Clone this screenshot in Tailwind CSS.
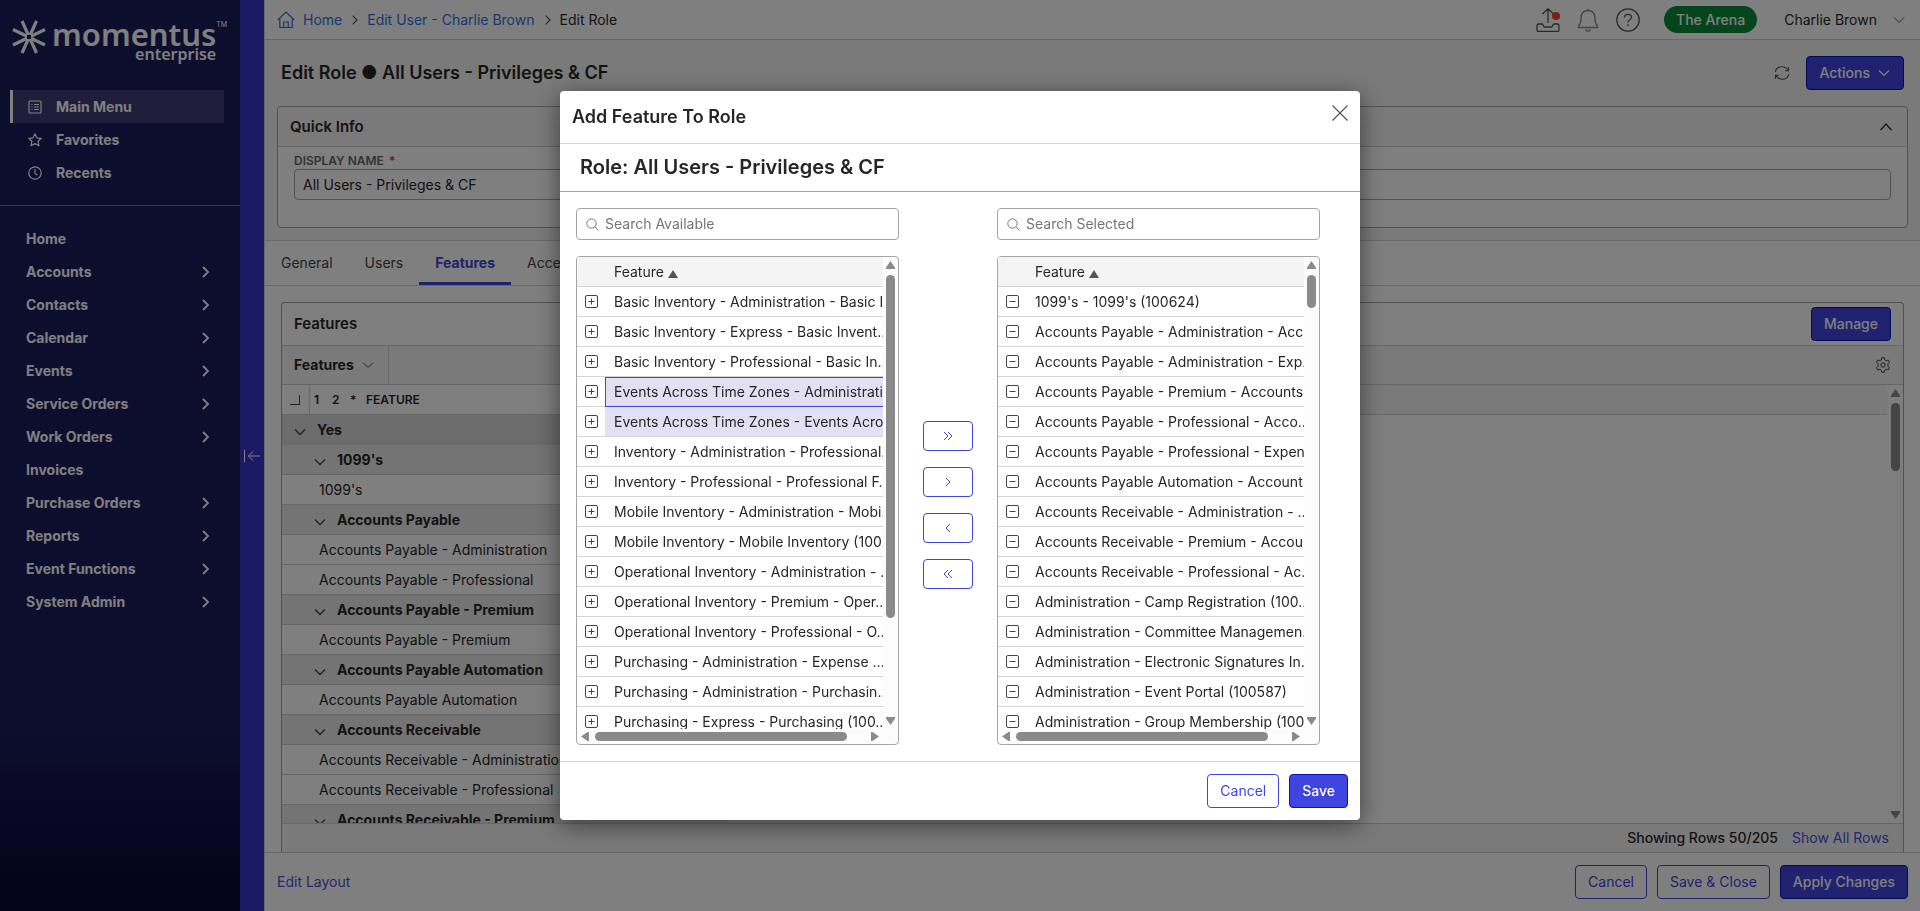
<!DOCTYPE html>
<html lang="en">
<head>
    <meta charset="UTF-8">
    <meta name="viewport" content="width=device-width, initial-scale=1.0">
    <title>Edit Role - Momentus Enterprise</title>
    <script src="https://cdn.jsdelivr.net/npm/@tailwindcss/browser@4"></script>
</head>
<body class="h-screen flex overflow-hidden bg-[#f4f4f4] font-[Inter,sans-serif] text-sm text-[#262626]">

    <!-- Sidebar -->
    <aside class="w-60 shrink-0 flex flex-col bg-linear-to-b from-[#1a1a5c] from-80% to-[#060632] text-white">
        <a href="#" aria-label="Momentus Enterprise" class="flex h-[90px] pt-5 pl-3 items-start">
            <svg class="w-[34px] h-[34px] shrink-0" viewBox="0 0 34 34" fill="none" stroke="currentColor" stroke-width="3.200">
                <path d="M1 9.500 33 25M1 25 33 9.500M10 1l14.500 32M24.500 1 10 33"/>
                <rect x="15" y="15" width="4" height="4" fill="#1a1a5c" stroke="none"/>
            </svg>
            <span class="flex flex-col items-end pl-1.5 font-['Noto_Sans',sans-serif] font-semibold">
                <span class="text-[31px] leading-7">momentus</span>
                <span class="text-base leading-3">enterprise</span>
            </span>
            <span class="text-[7px] leading-2.5">TM</span>
        </a>
        <nav class="flex flex-col pl-2.5 pr-4 pb-4 border-b border-white/40 font-bold">
            <a href="#" class="flex items-center h-[33px] pl-[15px] border-l-3 border-white bg-white/15">
                <svg class="w-3.5 h-3.5 mr-3.5" viewBox="0 0 14 14" fill="none" stroke="currentColor" stroke-width="1.200"><rect x="1" y="1" width="12" height="12" rx="1"/><path d="M3.500 4.500h1M6 4.500h5M3.500 7h1M6 7h5M3.500 9.500h1M6 9.500h5"/></svg>
                Main Menu
            </a>
            <a href="#" class="flex items-center h-[33px] pl-[15px] border-l-3 border-transparent">
                <svg class="w-3.5 h-3.5 mr-3.5" viewBox="0 0 14 14" fill="none" stroke="currentColor" stroke-width="1.200" stroke-linejoin="round"><path d="M7 .8l1.900 4 4.400.500-3.200 3 .900 4.500L7 10.600l-4 2.200.900-4.500-3.200-3 4.400-.500z"/></svg>
                Favorites
            </a>
            <a href="#" class="flex items-center h-[33px] pl-[15px] border-l-3 border-transparent">
                <svg class="w-3.5 h-3.5 mr-3.5" viewBox="0 0 14 14" fill="none" stroke="currentColor" stroke-width="1.200"><circle cx="7" cy="7" r="6.200"/><path d="M7 3v4.500l2.500 1.500"/></svg>
                Recents
            </a>
        </nav>
        <nav id="mainNav" class="flex flex-col pt-4 px-[26px] font-bold"></nav>
    </aside>
    <button aria-label="Collapse menu" class="w-6 shrink-0 flex items-center justify-center bg-[#3737ca] text-white">
        <svg class="w-4 h-4" viewBox="0 0 16 16" fill="none" stroke="currentColor"><path d="M.500 1.500v13M16 8H4.500M9 3.500 4.500 8 9 12.500"/></svg>
    </button>

    <main class="flex-1 min-w-0 flex flex-col border-l border-[#d0d0d0]">
        <!-- Top bar -->
        <header class="h-10 shrink-0 flex items-center justify-between pl-3 pr-[15px] bg-white border-b border-[#cfcfcf]">
            <div class="flex items-center text-[#2f6fe0]">
                <svg class="w-[18px] h-[18px] mr-2" viewBox="0 0 18 18" fill="none" stroke="currentColor" stroke-width="1.200"><path d="M.700 9 9 1l8.300 8M2.800 7.500V16.500h12.400V7.500M6.800 16.500V11h4.400v5.500"/></svg>
                <a href="#">Home</a>
                <svg class="w-1.5 h-2.5 ml-2.5 mr-[9px] text-[#555]" viewBox="0 0 6 10" fill="none" stroke="currentColor" stroke-width="1.200"><path d="M.700.700 5 5 .700 9.300"/></svg>
                <a href="#">Edit User - Charlie Brown</a>
                <svg class="w-1.5 h-2.5 ml-2.5 mr-[9px] text-[#555]" viewBox="0 0 6 10" fill="none" stroke="currentColor" stroke-width="1.200"><path d="M.700.700 5 5 .700 9.300"/></svg>
                <span class="text-[#262626]">Edit Role</span>
            </div>
            <div class="flex items-center text-[#555]">
                <button aria-label="Uploads" class="relative mr-4">
                    <svg class="w-6 h-6" viewBox="0 0 24 24" fill="none" stroke="currentColor" stroke-width="1.300" stroke-linejoin="round"><path d="M12 15V1M6.500 6 12 .8 17.500 6M1 17.500q0-1.500 1.500-1.500H6.500l1.700 3h7.600l1.700-3h4q1.500 0 1.500 1.500V22q0 1.300-1.300 1.300H2.300Q1 23.300 1 22z"/></svg>
                    <span class="absolute right-0 top-1 w-2 h-2 rounded-full bg-[#ff3a24]"></span>
                </button>
                <button aria-label="Notifications" class="mr-4 text-[#8a8a8a]">
                    <svg class="w-6 h-6" viewBox="0 0 24 24" fill="none" stroke="currentColor" stroke-width="1.300"><path d="M12 .500v2M2.500 19.500v-1.500Q5 15.500 5 10.500Q5 2.500 12 2.500T19 10.500q0 5 2.500 7.500v1.500zM9.500 21.500Q12 25 14.500 21.500"/></svg>
                </button>
                <button aria-label="Help" class="mr-6">
                    <svg class="w-6 h-6" viewBox="0 0 24 24" fill="none" stroke="currentColor" stroke-width="1.300"><circle cx="12" cy="12" r="11.200"/><path d="M8.500 9.500Q8.500 6.300 12 6.300T15.500 9.300Q15.500 11 13.500 12T12 14.500M12 16.300v1.700"/></svg>
                </button>
                <button class="h-[27px] px-3 rounded-full bg-[#0a8a38] text-white font-medium">The Arena</button>
                <button class="flex items-center ml-[27px] text-[#262626]">Charlie Brown
                    <svg class="w-3 h-3 ml-4 text-[#555]" viewBox="0 0 12 12" fill="none" stroke="currentColor"><path d="M1 3.500 6 8.500l5-5"/></svg>
                </button>
            </div>
        </header>

        <!-- Page title -->
        <div class="h-[66px] shrink-0 flex items-center justify-between px-4">
            <h1 class="text-lg font-semibold">Edit Role ● All Users - Privileges &amp; CF</h1>
            <div class="flex items-center">
                <button aria-label="Refresh" class="mr-4 text-[#555]">
                    <svg class="w-4 h-4" viewBox="0 0 16 16" fill="none" stroke="currentColor" stroke-width="1.100"><path d="M1.200 7Q2.200 1.700 8 1.700q4 0 6.300 4M14.500 2v3.800H11M14.800 9Q13.800 14.300 8 14.300q-4 0-6.300-4M1.500 14v-3.800H5"/></svg>
                </button>
                <button class="flex items-center h-[34px] pl-3 pr-[13px] rounded border border-[#0018b4] bg-[#4145e0] text-white font-medium">Actions
                    <svg class="w-3 h-3 ml-2" viewBox="0 0 12 12" fill="none" stroke="currentColor" stroke-width="1.200"><path d="M1 3.500 6 8.500l5-5"/></svg>
                </button>
            </div>
        </div>

        <!-- Quick info -->
        <section class="shrink-0 mx-3 mb-3 border border-[#a5a5a5] rounded bg-white">
            <div class="flex items-center justify-between h-10 pl-3 pr-3.5 rounded-t border-b border-[#cfcfcf] bg-[#f4f4f4]">
                <h2 class="text-[15px] font-semibold">Quick Info</h2>
                <button aria-label="Collapse"><svg class="w-3.5 h-3.5" viewBox="0 0 14 14" fill="none" stroke="currentColor" stroke-width="1.200"><path d="M1.500 10 7 4l5.500 6"/></svg></button>
            </div>
            <div class="px-4 pt-1.5 pb-[27px]">
                <label for="displayName" class="block h-4 text-xs leading-4 font-semibold text-[#666]">DISPLAY NAME <span class="ml-0.5 text-[#d93025]">*</span></label>
                <input id="displayName" type="text" value="All Users - Privileges &amp; CF" class="w-full h-[31px] px-2 border border-[#a5a5a5] rounded bg-white">
            </div>
        </section>

        <!-- Tabs -->
        <div class="h-[46px] shrink-0 flex bg-white border-y border-[#d4d4d4] text-[#444]">
            <a href="#" class="flex items-center px-4">General</a>
            <a href="#" class="flex items-center px-4">Users</a>
            <a href="#" class="flex items-center px-4 border-b-3 pt-0.5 border-[#3d42d8] font-bold text-[#3d42d8]">Features</a>
            <a href="#" class="flex items-center px-4">Access</a>
        </div>

        <!-- Features grid -->
        <div class="flex-1 min-h-0 flex flex-col pt-4 px-4 bg-white">
            <section class="flex-1 min-h-0 flex flex-col border border-b-0 border-[#a5a5a5] rounded-t">
                <div class="h-[43px] shrink-0 flex items-center justify-between px-3 border-b border-[#cfcfcf]">
                    <h2 class="text-[15px] font-semibold">Features</h2>
                    <button class="h-[34px] px-3 rounded border border-[#0018b4] bg-[#4145e0] text-white font-medium">Manage</button>
                </div>
                <div class="h-[39px] shrink-0 flex items-center justify-between pr-3 border-b border-[#cfcfcf] bg-[#f4f4f4]">
                    <button class="self-stretch flex items-center pl-3 pr-3.5 border-r border-[#cfcfcf] font-bold">Features
                        <svg class="w-3 h-3 ml-2 text-[#555]" viewBox="0 0 12 12" fill="none" stroke="currentColor"><path d="M1 3.500 6 8.500l5-5"/></svg>
                    </button>
                    <button aria-label="Grid settings" class="text-[#444]">
                        <svg class="w-4 h-4" viewBox="0 0 16 16" fill="none" stroke="currentColor" stroke-linejoin="round"><circle cx="8" cy="8" r="2.200"/><path d="M6.800.700h2.400l.500 2.100 1.500.900 2.100-.700 1.200 2.100L13 6.700v2.600l1.500 1.600-1.200 2.100-2.100-.700-1.500.900-.500 2.100H6.800l-.500-2.100-1.500-.900-2.100.700-1.200-2.100L3 9.300V6.700L1.500 5.100 2.700 3l2.100.700 1.500-.900z"/></svg>
                    </button>
                </div>
                <div class="flex-1 min-h-0 flex">
                    <div class="flex-1 overflow-hidden">
                        <div class="flex items-center h-[30px] border-b border-[#cfcfcf] bg-[#f4f4f4]">
                            <div class="self-stretch flex items-center w-[446px] bg-white text-xs font-semibold">
                                <span class="self-stretch w-7 flex items-center pl-2 border-r border-[#cfcfcf]"><span class="w-2.5 h-2.5 border-r border-b border-[#444]"></span></span>
                                <span class="w-[22px] pl-1">1</span><span class="w-[18px]">2</span><span class="w-4">*</span><span>FEATURE</span>
                            </div>
                        </div>
                        <table class="w-[446px] border-separate border-spacing-0"><tbody id="featureRows"></tbody></table>
                    </div>
                    <div class="w-4 flex flex-col items-center justify-between pt-1 pb-1 bg-[#fcfcfc] text-[#8a8a8a]">
                        <svg class="w-[9px] h-2" viewBox="0 0 9 8" fill="currentColor"><path d="M4.500 0 9 6.500V8H0V6.500z"/></svg>
                        <span class="w-[9px] h-[68px] mt-1.5 mb-auto rounded-full bg-[#8a8a8a]"></span>
                        <svg class="w-[9px] h-2" viewBox="0 0 9 8" fill="currentColor"><path d="M4.500 8 9 1.500V0H0v1.500z"/></svg>
                    </div>
                </div>
                <div class="h-[29px] shrink-0 flex items-center justify-end gap-3.5 pr-3.5 border-t border-[#cfcfcf] bg-[#f4f4f4]">
                    <span class="font-medium">Showing Rows 50/205</span>
                    <a href="#" class="text-[#4a4de0]">Show All Rows</a>
                </div>
            </section>
        </div>

        <!-- Bottom bar -->
        <footer class="h-[59px] shrink-0 flex items-center justify-between px-3 bg-white border-t border-[#cfcfcf]">
            <a href="#" class="text-[#4a4de0]">Edit Layout</a>
            <div class="flex gap-2.5">
                <button class="h-[34px] px-3 rounded border border-[#4145e0] text-[#4145e0]">Cancel</button>
                <button class="h-[34px] px-3 rounded border border-[#4145e0] text-[#4145e0]">Save &amp; Close</button>
                <button class="h-[34px] px-3 rounded border border-[#0018b4] bg-[#4145e0] text-white font-medium">Apply Changes</button>
            </div>
        </footer>
    </main>

    <!-- Modal -->
    <div class="fixed inset-0 flex items-center justify-center bg-black/50">
        <div role="dialog" aria-labelledby="dialogTitle" class="w-[800px] rounded bg-white shadow-[0_5px_24px_rgba(0,0,0,0.5)]">
            <div class="flex items-start justify-between h-[53px] px-3 pt-3.5 border-b border-[#d4d4d4]">
                <h2 id="dialogTitle" class="text-lg leading-6 font-semibold">Add Feature To Role</h2>
                <button aria-label="Close" class="text-[#555]"><svg class="w-4 h-4" viewBox="0 0 16 16" fill="none" stroke="currentColor" stroke-width="1.200"><path d="M.500.500l15 15M15.500.500l-15 15"/></svg></button>
            </div>
            <h3 class="h-12 flex items-center pl-5 pb-0.5 border-b border-[#a5a5a5] text-xl font-semibold">Role: All Users - Privileges &amp; CF</h3>
            <div class="flex items-start px-4 py-4">
                <div class="w-[323px]">
                    <label class="flex items-center h-8 px-[9px] mb-4 border border-[#a5a5a5] rounded">
                        <svg class="w-[13px] h-[13px] mr-1.5 text-[#777]" viewBox="0 0 13 13" fill="none" stroke="currentColor"><circle cx="5.500" cy="5.500" r="4.700"/><path d="M9 9l3.500 3.500"/></svg>
                        <input type="text" placeholder="Search Available" aria-label="Search Available" class="flex-1 outline-none placeholder:text-[#757575]">
                    </label>
                    <div class="flex h-[489px] border border-[#a5a5a5] rounded bg-[#fcfcfc] overflow-hidden text-[#8a8a8a]">
                        <div class="flex-1 min-w-0 flex flex-col">
                            <div class="flex-1 min-h-0 overflow-hidden bg-white">
                                <table class="w-[334px] table-fixed border-separate border-spacing-0 text-left text-[#262626]">
                                    <thead><tr>
                                        <th class="w-7 h-[30px] p-0 bg-[#f4f4f4] border-b border-[#d4d4d4]"></th>
                                        <th class="h-[30px] py-0 pl-[9px] bg-[#f4f4f4] border-b border-[#d4d4d4] font-normal">Feature <svg class="inline w-2.5 h-2 align-[-1px]" viewBox="0 0 10 8" fill="#555"><path d="M5 0l5 8H0z"/></svg></th>
                                    </tr></thead>
                                    <tbody id="availableRows"></tbody>
                                </table>
                            </div>
                            <div class="h-[15px] flex items-center pl-1 pr-1">
                                <svg class="w-2 h-[9px]" viewBox="0 0 8 9" fill="currentColor"><path d="M0 4.500 6.500 0H8v9H6.500z"/></svg>
                                <span class="w-[252px] h-[9px] ml-1.5 mr-auto rounded-full bg-[#8a8a8a]"></span>
                                <svg class="w-2 h-[9px]" viewBox="0 0 8 9" fill="currentColor"><path d="M8 4.500 1.500 0H0v9h1.500z"/></svg>
                            </div>
                        </div>
                        <div class="w-[15px] flex flex-col items-center pt-1 pb-[19px]">
                            <svg class="w-[9px] h-2" viewBox="0 0 9 8" fill="currentColor"><path d="M4.500 0 9 6.500V8H0V6.500z"/></svg>
                            <span class="w-[9px] h-[343px] mt-1.5 mb-auto rounded-full bg-[#8a8a8a]"></span>
                            <svg class="w-[9px] h-2" viewBox="0 0 9 8" fill="currentColor"><path d="M4.500 8 9 1.500V0H0v1.500z"/></svg>
                        </div>
                    </div>
                </div>
                <div class="flex-none w-[98px] flex flex-col items-center gap-4 pt-[213px] text-[#4145e0]">
                    <button aria-label="Add all" class="w-[50px] h-[30px] flex items-center justify-center rounded border border-[#4145e0]"><svg class="w-2.5 h-2.5" viewBox="0 0 10 10" fill="none" stroke="currentColor"><path d="M1 1l4 4-4 4M5 1l4 4-4 4"/></svg></button>
                    <button aria-label="Add" class="w-[50px] h-[30px] flex items-center justify-center rounded border border-[#4145e0]"><svg class="w-2.5 h-2.5" viewBox="0 0 10 10" fill="none" stroke="currentColor"><path d="M3 1l4 4-4 4"/></svg></button>
                    <button aria-label="Remove" class="w-[50px] h-[30px] flex items-center justify-center rounded border border-[#4145e0]"><svg class="w-2.5 h-2.5" viewBox="0 0 10 10" fill="none" stroke="currentColor"><path d="M7 1 3 5l4 4"/></svg></button>
                    <button aria-label="Remove all" class="w-[50px] h-[30px] flex items-center justify-center rounded border border-[#4145e0]"><svg class="w-2.5 h-2.5" viewBox="0 0 10 10" fill="none" stroke="currentColor"><path d="M5 1 1 5l4 4M9 1 5 5l4 4"/></svg></button>
                </div>
                <div class="w-[323px]">
                    <label class="flex items-center h-8 px-[9px] mb-4 border border-[#a5a5a5] rounded">
                        <svg class="w-[13px] h-[13px] mr-1.5 text-[#777]" viewBox="0 0 13 13" fill="none" stroke="currentColor"><circle cx="5.500" cy="5.500" r="4.700"/><path d="M9 9l3.500 3.500"/></svg>
                        <input type="text" placeholder="Search Selected" aria-label="Search Selected" class="flex-1 outline-none placeholder:text-[#757575]">
                    </label>
                    <div class="flex h-[489px] border border-[#a5a5a5] rounded bg-[#fcfcfc] overflow-hidden text-[#8a8a8a]">
                        <div class="flex-1 min-w-0 flex flex-col">
                            <div class="flex-1 min-h-0 overflow-hidden bg-white">
                                <table class="w-[334px] table-fixed border-separate border-spacing-0 text-left text-[#262626]">
                                    <thead><tr>
                                        <th class="w-7 h-[30px] p-0 bg-[#f4f4f4] border-b border-[#d4d4d4]"></th>
                                        <th class="h-[30px] py-0 pl-[9px] bg-[#f4f4f4] border-b border-[#d4d4d4] font-normal">Feature <svg class="inline w-2.5 h-2 align-[-1px]" viewBox="0 0 10 8" fill="#555"><path d="M5 0l5 8H0z"/></svg></th>
                                    </tr></thead>
                                    <tbody id="selectedRows"></tbody>
                                </table>
                            </div>
                            <div class="h-[15px] flex items-center pl-1 pr-1">
                                <svg class="w-2 h-[9px]" viewBox="0 0 8 9" fill="currentColor"><path d="M0 4.500 6.500 0H8v9H6.500z"/></svg>
                                <span class="w-[252px] h-[9px] ml-1.5 mr-auto rounded-full bg-[#8a8a8a]"></span>
                                <svg class="w-2 h-[9px]" viewBox="0 0 8 9" fill="currentColor"><path d="M8 4.500 1.500 0H0v9h1.500z"/></svg>
                            </div>
                        </div>
                        <div class="w-[15px] flex flex-col items-center pt-1 pb-[19px]">
                            <svg class="w-[9px] h-2" viewBox="0 0 9 8" fill="currentColor"><path d="M4.500 0 9 6.500V8H0V6.500z"/></svg>
                            <span class="w-[9px] h-[33px] mt-1.5 mb-auto rounded-full bg-[#8a8a8a]"></span>
                            <svg class="w-[9px] h-2" viewBox="0 0 9 8" fill="currentColor"><path d="M4.500 8 9 1.500V0H0v1.500z"/></svg>
                        </div>
                    </div>
                </div>
            </div>
            <div class="flex items-center justify-end gap-2.5 h-[59px] pr-3 border-t border-[#d4d4d4]">
                <button class="h-[34px] px-3 rounded border border-[#4145e0] text-[#4145e0]">Cancel</button>
                <button class="h-[34px] px-3 rounded border border-[#0018b4] bg-[#4145e0] text-white font-medium">Save</button>
            </div>
        </div>
    </div>

    <script>
        const navItems = [
            ["Home", false], ["Accounts", true], ["Contacts", true], ["Calendar", true], ["Events", true],
            ["Service Orders", true], ["Work Orders", true], ["Invoices", false], ["Purchase Orders", true],
            ["Reports", true], ["Event Functions", true], ["System Admin", true]
        ];
        document.getElementById("mainNav").innerHTML = navItems.map(([name, open]) => `
            <a href="#" class="flex items-center justify-between h-[33px] pr-1">${name}
                ${open ? '<svg class="w-2 h-3" viewBox="0 0 8 12" fill="none" stroke="currentColor" stroke-width="1.800"><path d="M1 1l5 5-5 5"/></svg>' : ''}
            </a>`).join('');

        // level 0 and 1 are group rows, level 2 is a plain row
        const features = [
            [0, "Yes"], [1, "1099's"], [2, "1099's"], [1, "Accounts Payable"],
            [2, "Accounts Payable - Administration"], [2, "Accounts Payable - Professional"],
            [1, "Accounts Payable - Premium"], [2, "Accounts Payable - Premium"],
            [1, "Accounts Payable Automation"], [2, "Accounts Payable Automation"],
            [1, "Accounts Receivable"], [2, "Accounts Receivable - Administration"],
            [2, "Accounts Receivable - Professional"], [1, "Accounts Receivable - Premium"]
        ];
        const cellStyles = [
            "h-[30px] py-0 pl-3 bg-[#d8d8d8] border-b border-[#d8d8d8] font-bold",
            "h-[30px] py-0 pl-8 bg-[#e9e9e9] border-b border-[#cfcfcf] font-bold",
            "h-[30px] py-0 pl-[37px] border-b border-[#cfcfcf]"
        ];
        const chevron = '<svg class="inline w-3 h-3 mr-[11px] mt-0.5 text-[#444]" viewBox="0 0 12 12" fill="none" stroke="currentColor" stroke-width="1.300"><path d="M1 3.500 6 8.500l5-5"/></svg>';
        document.getElementById("featureRows").innerHTML = features.map(([level, name]) =>
            `<tr><td class="${cellStyles[level]}">${level < 2 ? chevron : ''}${name}</td></tr>`).join('');

        const available = [
            "Basic Inventory - Administration - Basic In…", "Basic Inventory - Express - Basic Invent…",
            "Basic Inventory - Professional - Basic In…", "Events Across Time Zones - Administratio…",
            "Events Across Time Zones - Events Acros…", "Inventory - Administration - Professional…",
            "Inventory - Professional - Professional F…", "Mobile Inventory - Administration - Mobi…",
            "Mobile Inventory - Mobile Inventory (100…", "Operational Inventory - Administration - …",
            "Operational Inventory - Premium - Oper…", "Operational Inventory - Professional - O…",
            "Purchasing - Administration - Expense …", "Purchasing - Administration - Purchasin…",
            "Purchasing - Express - Purchasing (100…"
        ];
        const selected = [
            "1099's - 1099's (100624)", "Accounts Payable - Administration - Acc…",
            "Accounts Payable - Administration - Exp…", "Accounts Payable - Premium - Accounts …",
            "Accounts Payable - Professional - Acco…", "Accounts Payable - Professional - Expen…",
            "Accounts Payable Automation - Account…", "Accounts Receivable - Administration - …",
            "Accounts Receivable - Premium - Accou…", "Accounts Receivable - Professional - Ac…",
            "Administration - Camp Registration (100…", "Administration - Committee Managemen…",
            "Administration - Electronic Signatures In…", "Administration - Event Portal (100587)",
            "Administration - Group Membership (100…"
        ];
        const highlight = {
            3: "bg-[#e4e0f4] outline outline-1 -outline-offset-1 outline-[#4145e0]",
            4: "bg-[#e4e0f4]"
        };
        const row = (name, icon, extra) => `
            <tr>
                <td class="h-[30px] py-0 pl-2 border-b border-[#d4d4d4]">
                    <svg class="w-[13px] h-[13px]" viewBox="0 0 13 13" fill="none" stroke="#444"><rect x=".500" y=".500" width="12" height="12" rx="1.500"/><path d="${icon}"/></svg>
                </td>
                <td class="h-[30px] py-0 pl-[9px] border-b border-[#d4d4d4] whitespace-nowrap overflow-hidden ${extra}">${name}</td>
            </tr>`;
        document.getElementById("availableRows").innerHTML =
            available.map((name, i) => row(name, "M3.500 6.500h6M6.500 3.500v6", highlight[i] || "")).join('');
        document.getElementById("selectedRows").innerHTML =
            selected.map(name => row(name, "M3.500 6.500h6", "")).join('');
    </script>
</body>
</html>
